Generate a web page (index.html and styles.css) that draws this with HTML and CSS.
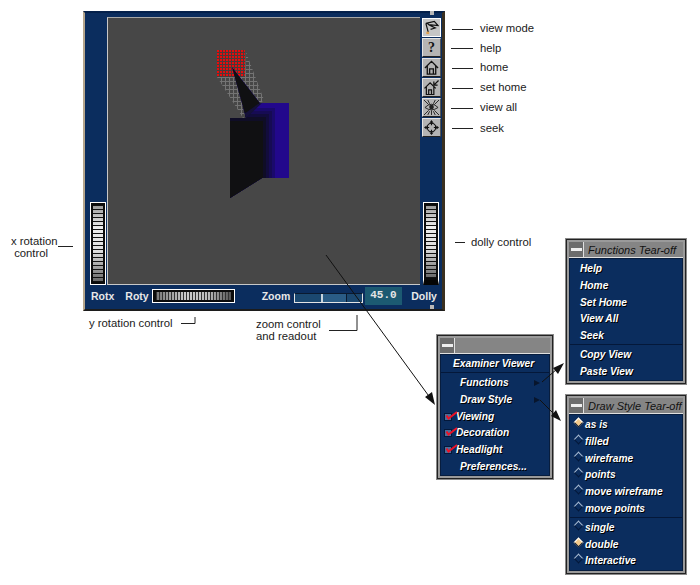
FILE: index.html
```html
<!DOCTYPE html>
<html lang="en">

<head>
    <meta charset="UTF-8">
    <title>Examiner Viewer</title>
    <link rel="stylesheet" href="styles.css">
</head>

<body>
    <div class="figure">

        <!-- viewer window -->
        <div class="viewer">
            <div class="viewer-main">
                <div class="side-left">
                    <div class="wheel wheel-v"><div class="wheel-in"></div></div>
                </div>
                <div class="viewport">
                    <svg class="scene" viewBox="108 18 311 266">
                        <defs>
                            <pattern id="gridGray" x="217" y="77" width="4" height="4" patternUnits="userSpaceOnUse">
                                <path d="M0 0.500H4M0.500 0V4" stroke="#747474" stroke-width="1" fill="none"/>
                            </pattern>
                            <pattern id="gridRed" x="217" y="50" width="3" height="3" patternUnits="userSpaceOnUse">
                                <rect width="3" height="3" fill="#4a3a3a"/>
                                <rect width="2" height="2" fill="#e80c0c"/>
                            </pattern>
                            <clipPath id="bodyClip">
                                <polygon points="232,67 260,103 289,103 289,178 262,178 230,198 230,118 246,118"/>
                            </clipPath>
                        </defs>
                        <polygon points="217,77 243,118 264,100 246,52 245,77" fill="url(#gridGray)"/>
                        <rect x="217" y="50" width="28" height="27" fill="url(#gridRed)"/>
                        <g clip-path="url(#bodyClip)">
                            <rect x="225" y="60" width="70" height="140" fill="#22088c"/>
                            <rect x="225" y="108" width="50" height="92" fill="#1a0a6c"/>
                            <rect x="225" y="111" width="47" height="89" fill="#160b54"/>
                            <rect x="225" y="114" width="44" height="86" fill="#120c3c"/>
                            <rect x="225" y="117" width="41" height="83" fill="#0f0d26"/>
                            <rect x="225" y="121" width="38" height="79" fill="#101012"/>
                            <polygon points="232,67 260,103 246,118 225,118" fill="#101012"/>
                            <polygon points="258,104 262,103 246,118 244,114" fill="#14103a"/>
                        </g>
                    </svg>
                </div>
                <div class="side-right">
                    <div class="tools">
                        <div class="tool tool-active">
                            <svg viewBox="0 0 16 16"><path d="M2 3.500 11 1.500 15 6 5 5 12 8.500 7 10M2 3.500 4.500 13M5 5 4 4" fill="none" stroke="#111" stroke-width="1.300"/><path d="M2.500 12.500H5.500V15H2.500Z" fill="#e0a050"/></svg>
                        </div>
                        <div class="tool"><span class="tool-q">?</span></div>
                        <div class="tool">
                            <svg viewBox="0 0 16 16"><path d="M1 8.500 8 1.500 15 8.500M3.500 6.500V15H12.500V6.500M6 15V9.500H10V15" fill="none" stroke="#111" stroke-width="1.400"/></svg>
                        </div>
                        <div class="tool">
                            <svg viewBox="0 0 16 16"><path d="M0.500 9 6.500 3 12.500 9M2.500 7.500V15.500H10.500V7.500M5 15.500V10.500H8V15.500" fill="none" stroke="#111" stroke-width="1.300"/><path d="M15.500 0.500 10.500 5.500M10.500 1.500V5.500H14.500" fill="none" stroke="#111" stroke-width="1.300"/></svg>
                        </div>
                        <div class="tool">
                            <svg viewBox="0 0 16 16"><path d="M1 8Q8 1 15 8Q8 13 1 8ZM0 0 5 5M16 0 11 5M0 16 5 11M16 16 11 11M8 11V16M4 16 6 12M12 16 10 12M4 0 6 4M12 0 10 4" fill="none" stroke="#222" stroke-width="1"/><circle cx="8" cy="7.500" r="2.500" fill="#222"/></svg>
                        </div>
                        <div class="tool">
                            <svg viewBox="0 0 16 16"><circle cx="8" cy="8" r="4.500" fill="none" stroke="#111" stroke-width="1.200"/><path d="M8 2V5.500M8 10.500V14M2 8H5.500M10.500 8H14" stroke="#111" stroke-width="1.200"/><path d="M8 0 5.800 2.800H10.200ZM8 16 5.800 13.200H10.200ZM0 8 2.800 5.800V10.200ZM16 8 13.200 5.800V10.200Z" fill="#111"/></svg>
                        </div>
                    </div>
                    <div class="wheel wheel-v wheel-dolly"><div class="wheel-in"></div></div>
                </div>
            </div>
            <div class="viewer-bar">
                <span class="bar-label bar-rotx">Rotx</span>
                <span class="bar-label bar-roty">Roty</span>
                <div class="wheel wheel-h"><div class="wheel-in"></div></div>
                <span class="bar-label bar-zoom">Zoom</span>
                <div class="zoom-slider"><div class="zoom-thumb"></div></div>
                <div class="readout">45.0</div>
                <span class="bar-label bar-dolly">Dolly</span>
            </div>
            <div class="handle handle-top"></div>
            <div class="handle handle-bottom"></div>
        </div>

        <!-- main popup -->
        <div class="menu menu-main">
            <div class="menu-title"><div class="menu-dash"></div></div>
            <div class="menu-body">
                <div class="item item-head">Examiner Viewer</div>
                <div class="sep"></div>
                <div class="item item-sub">Functions<i class="arrow-r"></i></div>
                <div class="item item-sub">Draw Style<i class="arrow-r"></i></div>
                <div class="item item-check"><i class="check"><svg viewBox="0 0 13 9"><path d="M1.500 4.500 3.500 7.500 12 1" fill="none" stroke="#ee1126" stroke-width="2"/></svg></i>Viewing</div>
                <div class="item item-check"><i class="check"><svg viewBox="0 0 13 9"><path d="M1.500 4.500 3.500 7.500 12 1" fill="none" stroke="#ee1126" stroke-width="2"/></svg></i>Decoration</div>
                <div class="item item-check"><i class="check"><svg viewBox="0 0 13 9"><path d="M1.500 4.500 3.500 7.500 12 1" fill="none" stroke="#ee1126" stroke-width="2"/></svg></i>Headlight</div>
                <div class="item item-sub">Preferences...</div>
            </div>
        </div>

        <!-- functions tear-off -->
        <div class="menu menu-functions">
            <div class="menu-title">
                <div class="menu-dash"></div><span class="menu-name">Functions Tear-off</span>
            </div>
            <div class="menu-body">
                <div class="item">Help</div>
                <div class="item">Home</div>
                <div class="item">Set Home</div>
                <div class="item">View All</div>
                <div class="item">Seek</div>
                <div class="sep"></div>
                <div class="item">Copy View</div>
                <div class="item">Paste View</div>
            </div>
        </div>

        <!-- draw style tear-off -->
        <div class="menu menu-style">
            <div class="menu-title">
                <div class="menu-dash"></div><span class="menu-name">Draw Style Tear-off</span>
            </div>
            <div class="menu-body">
                <div class="item"><i class="radio radio-on"></i>as is</div>
                <div class="item"><i class="radio"></i>filled</div>
                <div class="item"><i class="radio"></i>wireframe</div>
                <div class="item"><i class="radio"></i>points</div>
                <div class="item"><i class="radio"></i>move wireframe</div>
                <div class="item"><i class="radio"></i>move points</div>
                <div class="sep"></div>
                <div class="item"><i class="radio"></i>single</div>
                <div class="item"><i class="radio radio-on"></i>double</div>
                <div class="item"><i class="radio"></i>Interactive</div>
            </div>
        </div>

        <!-- callout labels -->
        <span class="note note-viewmode">view mode</span>
        <span class="note note-help">help</span>
        <span class="note note-home">home</span>
        <span class="note note-sethome">set home</span>
        <span class="note note-viewall">view all</span>
        <span class="note note-seek">seek</span>
        <span class="note note-dolly">dolly control</span>
        <span class="note note-xrot">x rotation<br>&nbsp;control</span>
        <span class="note note-yrot">y rotation control</span>
        <span class="note note-zoom">zoom control<br>and readout</span>

        <!-- callout lines and arrows -->
        <svg class="leaders" viewBox="0 0 700 585">
            <path d="M452 29.500H473M451 48.500H473M452 68.500H473M452 88.500H473M451 108.500H473M452 128.500H473M455 242.500H465M58 246.500H73M181 323.500H195V317M329 330.500H357V315" fill="none" stroke="#222" stroke-width="1"/>
            <path d="M326 255 431 399M542 382 557 369M540 400 556 416" fill="none" stroke="#111" stroke-width="1"/>
            <path d="M435 405 425 397 432 392ZM564 363 553 368 558 374ZM561 421 551 416 556 410Z" fill="#111"/>
        </svg>
    </div>
</body>

</html>
```

FILE: styles.css
```css
body {
    margin: 0;
    background: #fff;
    font-family: "Liberation Sans", Arial, sans-serif;
}

.figure {
    position: relative;
    width: 700px;
    height: 585px;
    overflow: hidden;
}

/* viewer window */
.viewer {
    position: absolute;
    left: 83px;
    top: 11px;
    width: 362px;
    height: 300px;
    box-sizing: border-box;
    display: flex;
    flex-direction: column;
    background: #0b2d5e;
    border-left: 2px solid #b5a58c;
    border-right: 3px solid #3a3020;
    border-top: 2px solid #04204a;
    border-bottom: 2px solid #1c1c1c;
}

.viewer-main {
    display: flex;
    height: 272px;
    padding-top: 4px;
    box-sizing: border-box;
}

.side-left {
    width: 22px;
    display: flex;
    flex-direction: column;
    justify-content: flex-end;
    align-items: flex-start;
    padding-left: 5px;
    box-sizing: border-box;
}

.viewport {
    width: 313px;
    height: 268px;
    box-sizing: border-box;
    background: #474747;
    border-left: 1px solid #c8c8c8;
    border-top: 1px solid #a8a8a8;
    border-bottom: 1px solid #c8c8c8;
    flex: none;
}

.scene {
    display: block;
    width: 311px;
    height: 266px;
}

.side-right {
    flex: 1;
    display: flex;
    flex-direction: column;
    justify-content: space-between;
    padding-left: 2px;
}

.tools {
    display: flex;
    flex-direction: column;
    gap: 1px;
    margin-top: 1px;
}

.tool {
    width: 19px;
    height: 19px;
    box-sizing: border-box;
    display: flex;
    align-items: center;
    justify-content: center;
    background: #b4b4b4;
    border: 1px solid;
    border-color: #e4e4e4 #555 #222 #e4e4e4;
}

.tool svg {
    width: 15px;
    height: 15px;
}

.tool-active {
    background: #c6c6c6;
    border-color: #fff;
}

.tool-q {
    font-family: "Liberation Serif", serif;
    font-size: 14px;
    font-weight: bold;
    color: #111;
}

.wheel {
    box-sizing: border-box;
    background: #0b0b0b;
    border: 1px solid #fff;
    padding: 2px;
}

.wheel-in {
    width: 100%;
    height: 100%;
}

.wheel-v {
    width: 16px;
    height: 83px;
}

.wheel-v .wheel-in {
    background:
        repeating-linear-gradient(to bottom, #111 0 1px, transparent 1px 4px),
        linear-gradient(to bottom, #999, #eee 30%, #ddd 60%, #666);
}

.wheel-h {
    width: 83px;
    height: 14px;
    margin-left: 3px;
    padding: 2px 3px;
}

.wheel-h .wheel-in {
    background:
        repeating-linear-gradient(to right, #333 0 1px, transparent 1px 3px),
        linear-gradient(to right, #777, #ccc 40%, #bbb 70%, #555);
}

.wheel-dolly {
    margin-left: 1px;
    border-bottom: 5px solid #050505;
}

.viewer-bar {
    flex: 1;
    display: flex;
    align-items: center;
    padding-bottom: 3px;
    box-sizing: border-box;
}

.bar-label {
    font-size: 10.500px;
    font-weight: bold;
    color: #e8e8e8;
}

.bar-rotx { margin-left: 6px; }
.bar-roty { margin-left: 11px; }
.bar-zoom { margin-left: 27px; }

.zoom-slider {
    width: 69px;
    height: 10px;
    margin-left: 4px;
    margin-top: 4px;
    box-sizing: border-box;
    background: #1b4870;
    border: 1px solid #e4e4e4;
    border-top-color: #0a1a30;
    position: relative;
}

.zoom-thumb {
    position: absolute;
    left: 26px;
    top: 0;
    width: 26px;
    height: 8px;
    box-sizing: border-box;
    background: #2a5c86;
    border-left: 2px solid #c8d4de;
    border-right: 1px solid #0a1a30;
}

.readout {
    width: 37px;
    height: 18px;
    margin-left: 2px;
    line-height: 16px;
    padding-left: 5px;
    box-sizing: border-box;
    background: #1c5a72;
    color: #e6e6e6;
    font-family: "Liberation Mono", monospace;
    font-size: 11px;
    font-weight: bold;
}

.bar-dolly { margin-left: 9px; }

.handle {
    position: absolute;
    width: 4px;
    height: 4px;
    left: 345px;
    background: #b8b8b8;
}

.handle-top { top: -2px; }
.handle-bottom { bottom: 0; }

/* popup menus */
.menu {
    position: absolute;
    box-sizing: border-box;
    background: #9a9a9a;
    border: 1px solid #222;
    outline: 1px solid #888;
    padding: 2px;
}

.menu-main {
    left: 437px;
    top: 335px;
    width: 116px;
    height: 144px;
}

.menu-functions {
    left: 566px;
    top: 239px;
    width: 120px;
    height: 145px;
}

.menu-style {
    left: 566px;
    top: 395px;
    width: 120px;
    height: 179px;
}

.menu-title {
    height: 16px;
    display: flex;
    align-items: center;
    background: #858585;
    border-bottom: 1px solid #e0e0e0;
    box-sizing: border-box;
}

.menu-dash {
    width: 15px;
    height: 15px;
    flex: none;
    box-sizing: border-box;
    background:
        linear-gradient(#eee, #eee) center / 11px 3px no-repeat,
        #6c6c6c;
    border-right: 1px solid #e0e0e0;
}

.menu-name {
    margin-left: 4px;
    font-size: 11px;
    font-style: italic;
    white-space: nowrap;
    color: #111;
}

.menu-body {
    height: calc(100% - 16px);
    box-sizing: border-box;
    background: #0b2d5e;
    border: 1px solid #071d3e;
    padding-top: 1px;
}

.item {
    position: relative;
    height: 16.800px;
    line-height: 17px;
    padding-left: 12px;
    font-size: 10.200px;
    font-style: italic;
    font-weight: bold;
    color: #fff;
    white-space: nowrap;
    text-shadow: 1px 1px 0 #000;
}

.item-head {
    padding-left: 12px;
    height: 16px;
    line-height: 16px;
}

.item-sub {
    padding-left: 19px;
}

.item-check {
    padding-left: 15px;
}

.sep {
    height: 1px;
    margin-bottom: 1px;
    background: #04183a;
}

.arrow-r {
    position: absolute;
    left: 93px;
    top: 6px;
    border-left: 6px solid #08152c;
    border-top: 3px solid transparent;
    border-bottom: 3px solid transparent;
}

.check {
    position: absolute;
    left: 3px;
    top: 5px;
    width: 8px;
    height: 8px;
    background: #4c6d99;
    border: 1px solid #04183a;
    box-sizing: border-box;
}

.check svg {
    position: absolute;
    left: 0;
    top: -3px;
    width: 13px;
    height: 9px;
}

.menu-functions .item {
    padding-left: 10px;
}

.menu-style .item {
    padding-left: 15px;
}

.radio {
    position: absolute;
    left: 5px;
    top: 3px;
    width: 5px;
    height: 5px;
    background: #0b2d5e;
    border: 1px solid;
    border-color: #a9bcd4 #04183a #04183a #a9bcd4;
    transform: rotate(45deg);
}

.radio-on {
    background: #f2c98a;
    border-color: #fff #04183a #04183a #fff;
}

/* callouts */
.note {
    position: absolute;
    font-size: 11.300px;
    line-height: 12px;
    color: #1a1a1a;
    white-space: nowrap;
}

.note-viewmode { left: 480px; top: 22px; }
.note-help { left: 480px; top: 42px; }
.note-home { left: 480px; top: 61px; }
.note-sethome { left: 480px; top: 81px; }
.note-viewall { left: 480px; top: 101px; }
.note-seek { left: 480px; top: 122px; }
.note-dolly { left: 471px; top: 236px; }
.note-xrot { left: 11px; top: 235px; }
.note-yrot { left: 89px; top: 317px; }
.note-zoom { left: 256px; top: 318px; }

.leaders {
    position: absolute;
    left: 0;
    top: 0;
    width: 700px;
    height: 585px;
    pointer-events: none;
}
```
